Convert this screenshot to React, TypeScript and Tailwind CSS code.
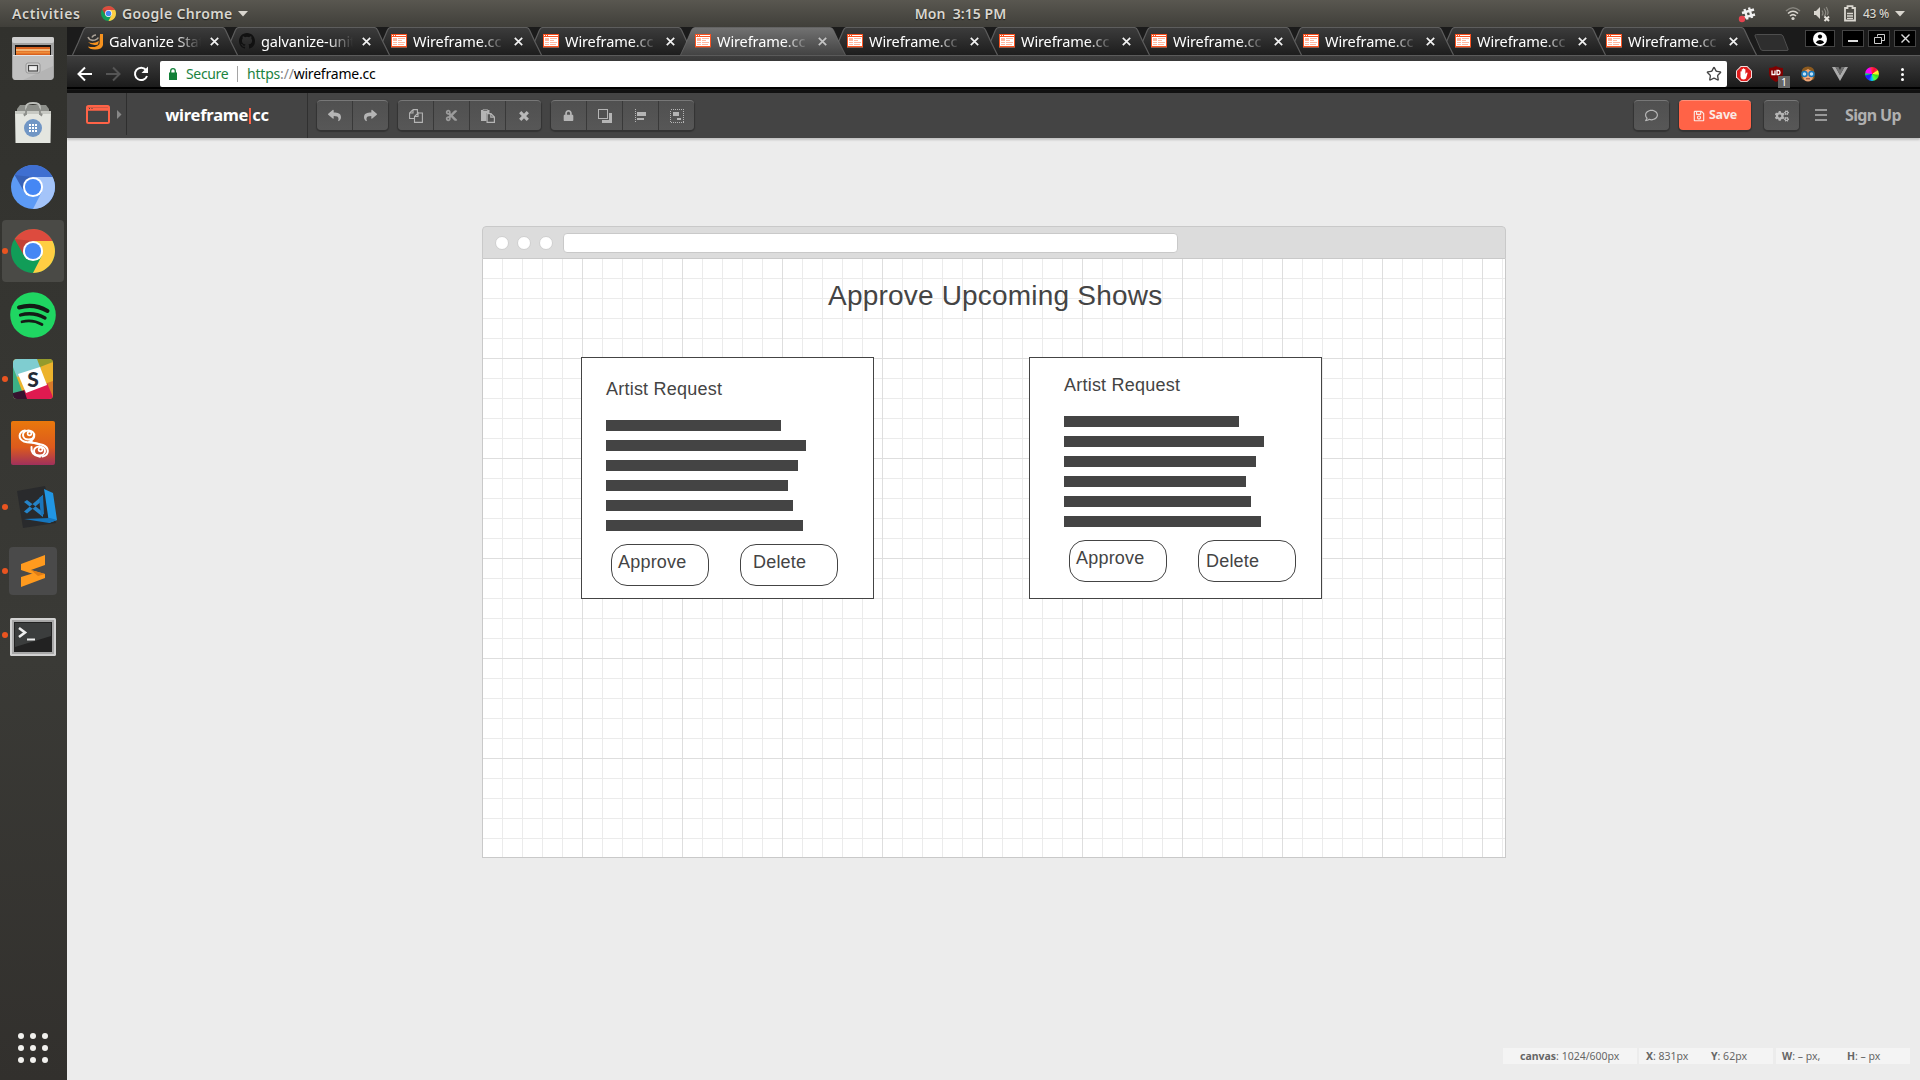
import React from "react";
import { LuStar } from "react-icons/lu";
import {
  FaReply,
  FaShare,
  FaLock,
  FaCogs,
  FaRegSave,
  FaRegComment,
  FaCut,
} from "react-icons/fa";

/* ---------- Shared drawings ---------- */

function ChromeLogo({ size, blue = false }: { size: number; blue?: boolean }) {
  const [top, left, right] = blue ? ["#3f6fd1", "#5c9af5", "#a4c4f9"] : ["#dd4b3e", "#119d58", "#ffce43"];
  return (
    <svg width={size} height={size} viewBox="0 0 48 48" className="shrink-0">
      <circle cx="24" cy="24" r="24" fill={left} />
      <path d="M24 13H45.3A24 24 0 0 1 24 48L33.5 29.5Z" fill={right} />
      <path d="M3.9 11A24 24 0 0 1 45.4 13H24L14.5 29.5Z" fill={top} />
      <path d="M3.9 11L14.5 29.5L24 13Z" fill="#000" opacity=".12" />
      <circle cx="24" cy="24" r="11" fill="#fff" />
      <circle cx="24" cy="24" r="8.8" fill="#4587f4" />
    </svg>
  );
}

function WireframeFavicon() {
  return (
    <svg width="16" height="14" viewBox="0 0 16 14" shapeRendering="crispEdges" className="shrink-0">
      <rect width="16" height="14" fill="#fb5422" />
      <rect x="1" y="1" width="1" height="1" fill="#fff" />
      <rect x="3" y="1" width="1" height="1" fill="#fff" />
      <rect x="5" y="1" width="10" height="1" fill="#fff" />
      <rect x="1" y="3" width="14" height="9" fill="#fff" />
      <path d="M2 4h4v3H2zM7 4h7v1H7zM7 6h4v1H7zM2 8h4v1H2zM7 8h7v1H7zM2 10h4v1H2zM7 10h6v1H7z" fill="#ffb79f" />
      <rect y="12" width="16" height="1" fill="#fb5422" />
      <rect y="13" width="16" height="1" fill="#8e5a49" />
    </svg>
  );
}

/* ---------- System bar ---------- */

function TopBar() {
  return (
    <header className="grid h-[27px] grid-cols-3 items-center bg-gradient-to-b from-[#595750] to-[#403f3a] text-[14px] font-semibold leading-[27px] text-[#d9d6cf] [text-shadow:0_1px_1px_rgba(0,0,0,.6)]">
      <div className="flex items-center pl-3">
        <span className="w-[89px] tracking-[0.6px]">Activities</span>
        <ChromeLogo size={15} />
        <span className="ml-[6px] w-[112px] whitespace-nowrap tracking-[0.35px]">Google Chrome</span>
        <svg width="10" height="6" className="ml-1"><path d="M0 0H10L5 5.5Z" fill="#d9d6cf" /></svg>
      </div>
      <div className="whitespace-pre pl-[1px] text-center tracking-[0.05px]">Mon  3:15 PM</div>
      <div className="flex items-center justify-end pr-[15px]">
        <svg width="18" height="18" viewBox="0 0 18 18" className="mr-[29px]">
          <g stroke="#f1f1f1" strokeWidth="2.4">
            <path d="M6.500 4L9.500 14.500M11 2.500L14 13M4 8L16 4.500M5 12.800L17 9.500" />
          </g>
          <circle cx="4" cy="14" r="3.2" fill="#e5434f" />
        </svg>
        <svg width="16" height="15" viewBox="0 0 16 15" fill="none" className="mr-3" strokeWidth="1.6">
          <path d="M1 5Q8 -1.5 15 5" stroke="#85837d" />
          <path d="M3 7.5Q8 3 13 7.5" stroke="#d9d6cf" />
          <path d="M5 10Q8 7.2 11 10" stroke="#d9d6cf" />
          <circle cx="8" cy="12.5" r="1.6" fill="#d9d6cf" />
        </svg>
        <svg width="18" height="16" viewBox="0 0 18 16" fill="none" className="mr-[13px]">
          <path d="M1 5h2l4-4v12l-4-4H1z" fill="#d9d6cf" />
          <path d="M9 4.5q2 2.5 0 5M11 2.5q3.4 4.5 0 8M13.2 1q3 5 1 8" stroke="#8b8982" strokeWidth="1.2" />
          <path d="M11.5 10.5l4.5 4.5M16 10.5l-4.5 4.5" stroke="#e5e2db" strokeWidth="2" />
        </svg>
        <svg width="12" height="17" viewBox="0 0 12 17" className="mr-[7px]">
          <path d="M1 15.5V3H3.5V1.2H8.5V3H11V15.5Z" fill="none" stroke="#d9d6cf" strokeWidth="1.8" />
          <path d="M3 8.5h6M3 11h6M3 13.3h6" stroke="#d9d6cf" strokeWidth="1.3" />
        </svg>
        <span className="w-[27px] whitespace-nowrap text-[12px] font-medium tracking-[-0.3px]">43 %</span>
        <svg width="10" height="6" className="ml-[5px]"><path d="M0 0H10L5 5.5Z" fill="#d9d6cf" /></svg>
      </div>
    </header>
  );
}

/* ---------- Dock ---------- */

function FilesIcon() {
  return (
    <svg width="44" height="46" viewBox="0 0 44 46">
      <rect x="1" y="1" width="42" height="42" rx="2" fill="#a3a3a3" />
      <rect x="1" y="1" width="42" height="6" rx="2" fill="#cfcfcf" />
      <rect x="4" y="9" width="36" height="11" fill="#191512" />
      <rect x="5" y="11" width="34" height="9" fill="#d9611d" />
      <rect x="5" y="13" width="34" height="2" fill="#f3b677" />
      <rect x="5" y="15.5" width="34" height="2" fill="#ef8c38" />
      <path d="M2 19H42V42a2 2 0 0 1-2 2H4a2 2 0 0 1-2-2Z" fill="#b4b4b4" />
      <path d="M2 19H42V30L12 44H4a2 2 0 0 1-2-2Z" fill="#c8c8c8" opacity=".6" />
      <path d="M2 19.500H42" stroke="#e4e4e4" />
      <rect x="15" y="27" width="14" height="10" rx="2" fill="#d8d8d8" stroke="#949494" />
      <rect x="17.500" y="29.500" width="9" height="5.500" fill="#eee" stroke="#444" strokeWidth="1.200" />
    </svg>
  );
}

function BagIcon() {
  return (
    <svg width="40" height="44" viewBox="0 0 40 44">
      <path d="M4 8L7 4H33L36 8V14H4Z" fill="#8d8f8a" />
      <path d="M13 9V6q0-4 7-4t7 4v3" fill="none" stroke="#bdbfba" strokeWidth="1.800" />
      <path d="M2 10Q20 16 38 10L37.500 42H2.500Z" fill="#e4e6e0" />
      <path d="M2 10h36v3H2z" fill="#c7c9c3" />
      <path d="M13 14q-3-2-1 1M27 14q3-2 1 1M13 14V11q0-5 7-5t7 5v3" fill="none" stroke="#8c8e89" strokeWidth="1.800" />
      <circle cx="20" cy="27" r="9" fill="#7096c5" />
      <path d="M16 23h2v2h-2zM19 23h2v2h-2zM22 23h2v2h-2zM16 26h2v2h-2zM19 26h2v2h-2zM22 26h2v2h-2zM16 29h2v2h-2zM19 29h2v2h-2zM22 29h2v2h-2z" fill="#fff" />
    </svg>
  );
}

function SpotifyIcon() {
  return (
    <svg width="46" height="46" viewBox="0 0 46 46">
      <circle cx="23" cy="23" r="22.800" fill="#1fd662" />
      <g fill="none" stroke="#141b16" strokeLinecap="round">
        <path d="M9 15.500Q24 11 37.500 19" strokeWidth="4" />
        <path d="M10.500 23Q23.500 19.500 35 26" strokeWidth="3.300" />
        <path d="M12 29.800Q22.500 27 32 32.500" strokeWidth="2.700" />
      </g>
    </svg>
  );
}

function SlackIcon() {
  return (
    <div className="relative h-10 w-10 overflow-hidden rounded">
      <svg width="40" height="40" viewBox="0 0 40 40" className="absolute inset-0">
        <rect width="40" height="40" fill="#ecb32d" />
        <path d="M0 0H25L28 10L4 18L0 10Z" fill="#7fcdd0" />
        <path d="M24 0H40V3L27 8Z" fill="#949b2c" />
        <path d="M0 8L12 40H0Z" fill="#3cb187" />
        <path d="M0 34L12 31L15 40H0Z" fill="#36132f" />
        <path d="M11 31L35 24L40 37V40H14Z" fill="#df1a50" />
        <path d="M34 24L40 22V38Z" fill="#d77a2b" />
        <path d="M5 15L27 8L34 26L13 34Z" fill="#fff" />
      </svg>
      <span className="absolute inset-0 text-center font-['Lato'] text-[21px] font-black leading-[40px] text-[#242b35]">S</span>
    </div>
  );
}

function SwirlIcon() {
  return (
    <svg width="46" height="46" viewBox="0 0 46 46">
      <defs>
        <linearGradient id="swirl" x1="0" y1="0" x2="0" y2="1">
          <stop offset="0" stopColor="#e9780c" />
          <stop offset=".6" stopColor="#dc5a1d" />
          <stop offset="1" stopColor="#a0305c" />
        </linearGradient>
      </defs>
      <rect x="1" y="1" width="44" height="44" rx="2" fill="url(#swirl)" />
      <g fill="none" stroke="#fff" strokeLinecap="round">
        <path d="M15 10.500C8 12 8 19 14 21.500C19 23.500 27 22 29.500 24.500" strokeWidth="2" />
        <ellipse cx="18.500" cy="15" rx="5.500" ry="4.600" strokeWidth="2" />
        <circle cx="19.500" cy="13.500" r="1.900" strokeWidth="1.700" />
        <path d="M24.500 14Q25 20 19 21.500" strokeWidth="1.600" />
        <path d="M32.500 36.500C40 35 39 27.500 33 25C29 23.500 22 24 21 21" strokeWidth="2" />
        <ellipse cx="29.500" cy="31" rx="5.500" ry="4.600" strokeWidth="2" />
        <circle cx="30.500" cy="29.500" r="1.900" strokeWidth="1.700" />
        <path d="M21.500 27Q20.500 35 30 36.800" strokeWidth="2" />
      </g>
    </svg>
  );
}

function CodeIcon() {
  return (
    <svg width="44" height="44" viewBox="0 0 44 44">
      <path d="M3 6L31 1L42 38L9 43Z" fill="#292a2c" />
      <path d="M30 4L39 8L43 35L35 38L31 10Z" fill="#2196e3" />
      <path d="M10 34L35 38L43 35L36 33Z" fill="#1676bd" />
      <path d="M10 17L13 15L29 27V32ZM10 26.500L13 28.500L29 15V10Z" fill="#2584c9" />
      <path d="M25 13L29 10L30 29L27 31Z" fill="#1b75ba" />
    </svg>
  );
}

function SublimeIcon() {
  return (
    <div className="flex h-12 w-12 items-center justify-center rounded bg-[#4a4a4a]">
      <svg width="26" height="34" viewBox="0 0 26 34">
        <path d="M1 10L25 1V11L11 16L25 20V24L1 16Z" fill="#ff9a1e" />
        <path d="M1 15.500L25 22V24L1 33V23L14 19Z" fill="#ff9a1e" />
        <path d="M11 16L25 20L18 22Z" fill="#e07c14" />
      </svg>
    </div>
  );
}

function TerminalIcon() {
  return (
    <svg width="46" height="38" viewBox="0 0 46 38">
      <rect width="46" height="38" rx="1.500" fill="#d2d2d2" />
      <rect x="2" y="2" width="42" height="34" fill="#a8a8a8" />
      <rect x="4" y="4" width="38" height="30" fill="#222" />
      <path d="M5 5H41V18L5 29Z" fill="#3b3d3d" />
      <path d="M9 10L15 14.500L9 19" fill="none" stroke="#eee" strokeWidth="2.600" />
      <path d="M17 21.500h8" stroke="#eee" strokeWidth="2" />
    </svg>
  );
}

const dockItems: { name: string; icon: React.ReactNode; running?: boolean; active?: boolean; nudge?: string }[] = [
  { name: "Files", icon: <FilesIcon />, nudge: "pb-[1px]" },
  { name: "Software", icon: <BagIcon />, nudge: "pb-[1px]" },
  { name: "Chromium", icon: <ChromeLogo size={44} blue /> },
  { name: "Chrome", icon: <ChromeLogo size={44} />, running: true, active: true },
  { name: "Spotify", icon: <SpotifyIcon /> },
  { name: "Slack", icon: <SlackIcon />, running: true },
  { name: "Swirl", icon: <SwirlIcon /> },
  { name: "Code", icon: <CodeIcon />, running: true, nudge: "pl-[5px]" },
  { name: "Sublime", icon: <SublimeIcon />, running: true },
  { name: "Terminal", icon: <TerminalIcon />, running: true, nudge: "pt-[4px]" },
];

function Dock() {
  return (
    <aside className="flex w-[67px] shrink-0 flex-col justify-between bg-gradient-to-b from-[#31312d] via-[#3a3a36] via-60% to-[#32302d]">
      <div className="flex flex-col gap-[2px] pl-[2px] pt-[1px]">
        {dockItems.map((d) => (
          <div
            key={d.name}
            className={`relative flex h-[62px] w-[62px] items-center justify-center rounded ${d.active ? "bg-[#4a4a46]" : ""} ${d.nudge ?? ""}`}
          >
            {d.icon}
            {d.running && <span className="absolute left-0 top-7 h-[6px] w-[6px] rounded-full bg-[#e95420]" />}
          </div>
        ))}
      </div>
      <div className="mb-[17px] ml-[18px] grid w-[30px] grid-cols-3 gap-[6px]">
        {Array.from({ length: 9 }, (_, i) => (
          <span key={i} className="h-[6px] w-[6px] rounded-full bg-[#f2f1ee]" />
        ))}
      </div>
    </aside>
  );
}

/* ---------- Browser chrome ---------- */

type TabInfo = { title: string; icon: React.ReactNode; active?: boolean };

const wire = (active = false): TabInfo => ({ title: "Wireframe.cc", icon: <WireframeFavicon />, active });

const tabs: TabInfo[] = [
  {
    title: "Galvanize Stat",
    icon: (
      <svg width="16" height="17" viewBox="0 0 16 17" className="shrink-0">
        <path d="M13 1H16V12Q15 16.500 8 16.500Q2 16.500 1 13.500Q9 15.500 12.500 11Z" fill="#f6921e" />
        <path d="M1 9Q6 11.500 12 8L11 11.500Q5 13.500 1 9Z" fill="#f6921e" />
        <path d="M1 4Q3 8.500 8 7Q11 6 11 4.500M5 4.500Q6 2 9 2" stroke="#a8a096" strokeWidth="1.600" fill="none" />
      </svg>
    ),
  },
  {
    title: "galvanize-unit",
    icon: (
      <svg width="16" height="16" viewBox="0 0 16 16" className="shrink-0">
        <path
          fill="#111"
          d="M8 0C3.580 0 0 3.580 0 8c0 3.540 2.290 6.530 5.470 7.590.4.070.55-.17.55-.38 0-.19-.01-.82-.01-1.490-2.010.37-2.530-.49-2.690-.94-.09-.23-.48-.94-.82-1.130-.28-.15-.68-.52-.01-.53.63-.01 1.080.58 1.230.82.72 1.210 1.870.87 2.330.66.07-.52.28-.87.51-1.070-1.780-.2-3.640-.89-3.640-3.950 0-.87.31-1.590.82-2.150-.08-.2-.36-1.020.08-2.120 0 0 .67-.21 2.200.82a7.400 7.400 0 0 1 4 0c1.530-1.040 2.200-.82 2.200-.82.44 1.100.16 1.920.08 2.120.51.56.82 1.270.82 2.150 0 3.070-1.870 3.750-3.650 3.950.29.25.54.73.54 1.480 0 1.070-.01 1.930-.01 2.200 0 .21.15.46.55.38A8 8 0 0 0 16 8c0-4.420-3.580-8-8-8z"
        />
      </svg>
    ),
  },
  wire(),
  wire(),
  wire(true),
  wire(),
  wire(),
  wire(),
  wire(),
  wire(),
  wire(),
];

function Tab({ tab, index }: { tab: TabInfo; index: number }) {
  const id = `tab-fill-${index}`;
  return (
    <div
      className={`relative flex h-7 w-[166px] shrink-0 items-center pl-[15px] ${index === 9 ? "-mr-[15px]" : "-mr-[14px]"}`}
      style={{ zIndex: tab.active ? 30 : 20 - index }}
    >
      <svg width="166" height="28" viewBox="0 0 166 28" className="absolute inset-0">
        <defs>
          <linearGradient id={id} x1="0" y1="0" x2="0" y2="1">
            <stop offset="0" stopColor={tab.active ? "#727272" : "#3c3c3c"} />
            <stop offset="1" stopColor={tab.active ? "#434343" : "#1d1d1d"} />
          </linearGradient>
        </defs>
        <path d="M0.500 28L6 16L11.500 3Q12.500 0.500 15 0.500H150Q152.500 0.500 153.500 3L159 15L165.500 28" fill={`url(#${id})`} stroke={tab.active ? "#777" : "#5d5d5d"} strokeWidth={tab.active ? 0.6 : 1.2} />
      </svg>
      <div className="relative flex items-center">
        {tab.icon}
        <span className="ml-[6px] w-[92px] overflow-hidden whitespace-nowrap text-[14.5px] leading-5 tracking-[-0.1px] text-white [mask-image:linear-gradient(to_right,#000_72%,transparent_100%)]">
          {tab.title}
        </span>
        <svg width="9" height="9" viewBox="0 0 9 9" className="ml-[9px]">
          <path d="M0.800 0.800L8.200 8.200M8.200 0.800L0.800 8.200" stroke={tab.active ? "#c4c4c4" : "#f2f2f2"} strokeWidth="1.700" />
        </svg>
      </div>
    </div>
  );
}

function WinButton({ wide = false, children }: { wide?: boolean; children: React.ReactNode }) {
  return (
    <div className={`flex h-[17px] items-center justify-center border border-[#444] bg-black ${wide ? "mr-[3px] w-[30px]" : "w-[22px]"}`}>
      {children}
    </div>
  );
}

function TabStrip() {
  return (
    <div className="flex h-7 justify-between bg-[#1b1b1b] pl-[5px]">
      <div className="flex">
        {tabs.map((t, i) => (
          <Tab key={i} tab={t} index={i} />
        ))}
        <svg width="36" height="18" viewBox="0 0 36 18" className="ml-[11px] mt-[7px]">
          <path d="M1 2Q0.500 0.500 2.500 0.500H26Q28.500 0.500 29 2L34 15Q34.500 16.500 33 16.500H9Q7 16.500 6.500 15Z" fill="#2e2e2e" stroke="#4e4e4e" />
        </svg>
      </div>
      <div className="mr-1 mt-[3px] flex gap-1">
        <WinButton wide>
          <svg width="14" height="14" viewBox="0 0 14 14">
            <circle cx="7" cy="7" r="7" fill="#fff" />
            <circle cx="7" cy="4.600" r="2.100" fill="#000" />
            <path d="M2.800 10.500Q4 8 7 8T11.200 10.500Q9 12.300 7 12.300T2.800 10.500Z" fill="#000" />
          </svg>
        </WinButton>
        <WinButton>
          <span className="mt-1 h-[2px] w-[10px] bg-[#ddd]" />
        </WinButton>
        <WinButton>
          <svg width="11" height="10" viewBox="0 0 11 10" fill="none" stroke="#ccc">
            <path d="M3.500 2.500V0.500H10.500V6.500H7.500M0.500 3.500H7.500V9.500H0.500Z" />
          </svg>
        </WinButton>
        <WinButton>
          <svg width="9" height="9" viewBox="0 0 9 9" stroke="#ddd" strokeWidth="1.400">
            <path d="M0.500 0.500L8.500 8.500M8.500 0.500L0.500 8.500" />
          </svg>
        </WinButton>
      </div>
    </div>
  );
}

function Extensions() {
  return (
    <div className="flex items-center">
      <svg width="16" height="16" viewBox="0 0 16 16" className="ml-[9px]">
        <path d="M4.700 0H11.300L16 4.700V11.300L11.300 16H4.700L0 11.300V4.700Z" fill="#f3dcdc" />
        <path d="M5.100 1H10.900L15 5.100V10.900L10.900 15H5.100L1 10.900V5.100Z" fill="#df1c1c" />
        <path d="M4.500 5.500q.7-.7 1.200 0V3.500q.6-.8 1.200 0V2.700q.7-.8 1.300 0v.6q.7-.6 1.200.2V8l1.200-1.500q1-.3 1 .6L10 12.500q-1 1-2.500 1Q5 13.500 4.500 11Z" fill="#fff" />
      </svg>
      <div className="relative ml-4 h-4 w-4">
        <svg width="16" height="16" viewBox="0 0 16 16">
          <path d="M8 0Q11 2 15 2V7Q15 13 8 16Q1 13 1 7V2Q5 2 8 0Z" fill="#800000" />
          <path d="M4 4.500V8.500H7V4.500M9 4.500V8.500H10.500Q12 8.500 12 6.500T10.500 4.500Z" fill="none" stroke="#fff" strokeWidth="1.300" />
        </svg>
        <span className="absolute left-[10px] top-[10px] h-3 w-[12px] bg-[#666] text-center text-[10.5px] leading-3 text-white">1</span>
      </div>
      <svg width="16" height="16" viewBox="0 0 16 16" className="ml-4">
        <path d="M1.500 7Q1.500 0.500 8 0.500T14.500 7V12L13 14H3L1.500 12Z" fill="#8c5a1f" />
        <path d="M3 6L8 3L13 6V11Q12 15.500 8 15.500T3 11Z" fill="#efa878" />
        <circle cx="4.500" cy="8" r="2.500" fill="#bfe3f8" stroke="#1778bd" strokeWidth="1.500" />
        <circle cx="11.500" cy="8" r="2.500" fill="#bfe3f8" stroke="#1778bd" strokeWidth="1.500" />
        <path d="M6 12.800h4" stroke="#8b4031" />
      </svg>
      <svg width="16" height="14" viewBox="0 0 16 14" className="ml-4">
        <path d="M0 0H3.500L8 8L12.500 0H16L8 14Z" fill="#aaa" />
        <path d="M3.500 0H6.500L8 3L9.500 0H12.500L8 8Z" fill="#707070" />
      </svg>
      <div className="ml-[17px] h-[14px] w-[14px] rounded-full bg-[conic-gradient(#f33,#f04_8%,#f33_14%,#ff3_18%,#ee2_24%,#3d2_30%,#5f3_42%,#0cf_50%,#22f_60%,#22f_70%,#0e5_74%,#f0f_80%,#f0f_92%,#f33)]" />
      <div className="ml-[22px] flex flex-col gap-[2px]">
        {[0, 1, 2].map((i) => (
          <span key={i} className="h-[3px] w-[3px] rounded-full bg-white" />
        ))}
      </div>
    </div>
  );
}

function AddressBar() {
  return (
    <div className="h-[38px] border-t border-[#5a5a5a] bg-[linear-gradient(#3e3e3e,#1b1b1b_31px,#000_31px,#000_33px,#222_33px,#111_34px)] pt-[5px]">
      <div className="flex h-[26px] items-center">
        <svg width="82" height="16" viewBox="0 0 82 16" className="ml-[10px] shrink-0" fill="none">
          <path d="M15 8H2M8 1.500L1.500 8L8 14.500" stroke="#fff" strokeWidth="2" />
          <path d="M29 8H42M36 1.500L42.500 8L36 14.500" stroke="#555" strokeWidth="2" />
          <path d="M69 4A6.200 6.200 0 1 0 70 10" stroke="#fff" strokeWidth="2" />
          <path d="M71 0.500V7H64.500Z" fill="#fff" />
        </svg>
        <div className="ml-[1px] flex h-[26px] w-[1567px] items-center rounded-[2px] bg-white pl-[9px] text-[14px] leading-[26px]">
          <svg width="8" height="12" viewBox="0 0 8 12">
            <path d="M0 4.500H8V12H0Z" fill="#128038" />
            <path d="M1.700 5V3a2.300 2.300 0 0 1 4.600 0V5" fill="none" stroke="#128038" strokeWidth="1.300" />
          </svg>
          <span className="ml-[9px] w-[43px] whitespace-nowrap tracking-[-0.35px] text-[#1c833f]">Secure</span>
          <span className="ml-2 h-4 w-px bg-[#a5a5a5]" />
          <span className="ml-[9px] whitespace-nowrap tracking-[-0.2px] text-black">
            <span className="text-[#1c833f]">https</span>
            <span className="text-[#888]">://</span>wireframe.cc
          </span>
          <LuStar size={16} className="ml-auto mr-[5px] text-[#444]" strokeWidth={2} />
        </div>
        <Extensions />
      </div>
    </div>
  );
}

/* ---------- Wireframe editor toolbar ---------- */

function ButtonGroup({ icons, className = "" }: { icons: React.ReactNode[]; className?: string }) {
  return (
    <div className={`flex h-[30px] overflow-hidden rounded border-t border-[#777] bg-gradient-to-b from-[#505050] to-[#575757] text-[#b5b5b5] shadow-[0_1px_1px_1px_#333] ${className}`}>
      {icons.map((icon, i) => (
        <button key={i} className={`flex h-[29px] items-center justify-center ${i > 0 ? "w-9 border-l border-[#393939]" : "w-[35px]"}`}>
          {icon}
        </button>
      ))}
    </div>
  );
}

const CopyIcon = (
  <svg width="14" height="14" viewBox="0 0 14 14" fill="none" stroke="#b5b5b5" strokeWidth="1.1">
    <path d="M4 0.600H8.400V4M4 0.600L0.600 4V9.500H5M0.600 4H4V0.600M9 4H13.400V13.400H5.500V7.500L9 4V7.500H5.500" />
  </svg>
);

const PasteIcon = (
  <svg width="14" height="14" viewBox="0 0 14 14">
    <path d="M0 1H8.500V4H5.500V12H0Z" fill="#b5b5b5" />
    <path d="M2 0.500H6.500V2H2Z" fill="#555" stroke="#b5b5b5" strokeWidth="0.600" />
    <path d="M6.100 4.600H10L13.400 8V13.400H6.100ZM9.800 4.600V8.200H13.400" fill="none" stroke="#b5b5b5" strokeWidth="1.200" />
  </svg>
);

const RemoveIcon = (
  <svg width="10" height="10" viewBox="0 0 10 10" fill="none" stroke="#b9b9b9" strokeWidth="3.200">
    <path d="M1.200 1.200L8.800 8.800M8.800 1.200L1.200 8.800" />
  </svg>
);

const LayersIcon = (
  <svg width="14" height="14" viewBox="0 0 14 14" shapeRendering="crispEdges">
    <path d="M4 11H11V4H14V14H4Z" fill="#b5b5b5" />
    <rect x="0.500" y="0.500" width="9" height="9" fill="#505050" stroke="#b5b5b5" />
  </svg>
);

const AlignIcon = (
  <svg width="12" height="14" viewBox="0 0 12 14" shapeRendering="crispEdges">
    <path d="M0.500 0V14" stroke="#b5b5b5" strokeDasharray="1 1" />
    <path d="M2 3H11V7H2ZM2 9H9V11H2Z" fill="#b5b5b5" />
  </svg>
);

const GroupIcon = (
  <svg width="14" height="14" viewBox="0 0 14 14" shapeRendering="crispEdges">
    <rect x="0.500" y="0.500" width="13" height="13" fill="none" stroke="#b5b5b5" strokeDasharray="1 1" />
    <path d="M3 3H9V7H3ZM7 9H11V11H7Z" fill="#b5b5b5" />
  </svg>
);

function EditorBar() {
  return (
    <div className="relative z-10 flex h-[45px] items-center bg-[#444] pb-px shadow-[0_2px_2px_0_#c2c2c2]">
      <div className="flex h-[42px] w-[60px] items-center self-start border-r border-[#2e2e2e] pl-[19px]">
        <svg width="24" height="19" viewBox="0 0 24 19">
          <rect x="1" y="1" width="22" height="17" rx="1.500" fill="none" stroke="#ff6347" strokeWidth="2" />
          <path d="M1 4H23" stroke="#ff6347" strokeWidth="3.500" />
          <path d="M3 3.500h1M5.500 3.500h1" stroke="#444" strokeWidth="1" />
        </svg>
        <svg width="5" height="9" className="ml-[7px]"><path d="M0 0L4.500 4.500L0 9Z" fill="#888" /></svg>
      </div>
      <div className="flex h-[45px] w-[181px] items-center justify-center self-start border-r border-[#303030] text-[16.5px] font-bold tracking-[-0.25px] text-white">
        wireframe<span className="mx-[1px] h-4 w-[2px] bg-[#ff6347]" />cc
      </div>
      <ButtonGroup className="ml-[9px]" icons={[<FaReply size={13} />, <FaShare size={13} />]} />
      <ButtonGroup className="ml-[10px]" icons={[CopyIcon, <FaCut size={13} className="opacity-75" />, PasteIcon, RemoveIcon]} />
      <ButtonGroup className="ml-[10px]" icons={[<FaLock size={11} />, LayersIcon, AlignIcon, GroupIcon]} />
      <ButtonGroup className="ml-auto" icons={[<FaRegComment size={13} />]} />
      <button className="ml-[10px] flex h-[30px] w-[72px] items-center justify-center rounded border-t border-[#ff907a] bg-[#ff6347] text-[12.5px] font-bold text-[#fbe9e5] shadow-[0_1px_1px_1px_#333]">
        <FaRegSave size={12} className="mr-[4px]" />
        <span className="tracking-[-0.2px]">Save</span>
      </button>
      <ButtonGroup className="ml-[13px]" icons={[<FaCogs size={14} />]} />
      <div className="ml-4 flex w-[12px] flex-col gap-[3px]">
        {[0, 1, 2].map((i) => (
          <span key={i} className="h-[2px] bg-[#999]" />
        ))}
      </div>
      <span className="ml-[18px] mr-[17px] w-[58px] whitespace-nowrap text-[16px] font-bold tracking-[-0.65px] text-[#b0b0b0]">Sign Up</span>
    </div>
  );
}

/* ---------- Canvas ---------- */

const lineWidths = [175, 200, 192, 182, 187, 197];

function RequestCard({ className, inner, deleteText }: { className: string; inner: string; deleteText: string }) {
  return (
    <div className={`absolute h-[242px] w-[293px] border border-[#444] bg-white ${className}`}>
      <div className={inner}>
        <h2 className="text-[18px] leading-5 tracking-[0.22px]">Artist Request</h2>
        <div className="mt-[21px] flex flex-col gap-[9px]">
          {lineWidths.map((w) => (
            <div key={w} className="h-[11px] bg-[#444]" style={{ width: w }} />
          ))}
        </div>
        <div className="ml-[5px] mt-[13px] flex gap-[31px] text-[18px] leading-5 tracking-[0.2px]">
          <div className="h-[42px] w-[98px] rounded-[16px] border border-[#444] pl-[6px] pt-[7px]">Approve</div>
          <div className={`h-[42px] w-[98px] rounded-[16px] border border-[#444] ${deleteText}`}>Delete</div>
        </div>
      </div>
    </div>
  );
}

function Canvas() {
  return (
    <div className="ml-[415px] mt-[88px] w-[1024px] overflow-hidden rounded-t-[4px] font-['Liberation_Sans',Arial,sans-serif] text-[#444]">
      <div className="flex h-[33px] items-center rounded-t-[4px] border border-[#c9c9c9] bg-[#dcdcdc] pl-[12px]">
        <div className="flex gap-2">
          {[0, 1, 2].map((i) => (
            <span key={i} className="h-[14px] w-[14px] rounded-full border border-[#cfcfcf] bg-white" />
          ))}
        </div>
        <div className="ml-[10px] h-5 w-[615px] rounded border border-[#c9c9c9] bg-white" />
      </div>
      <div className="relative h-[599px] border border-t-0 border-[#c9c9c9] bg-white">
        <div className="absolute inset-0 bg-[linear-gradient(to_right,transparent_99px,#dedede_99px),linear-gradient(to_bottom,transparent_99px,#dedede_99px),linear-gradient(to_right,transparent_19px,#ebebeb_19px),linear-gradient(to_bottom,transparent_19px,#ebebeb_19px)] bg-[size:100px_100px,100px_100px,20px_20px,20px_20px]" />
        <h1 className="absolute left-[345px] top-[21px] whitespace-nowrap text-[28px] leading-8 tracking-[0.2px]">Approve Upcoming Shows</h1>
        <RequestCard className="left-[98px] top-[98px]" inner="pl-6 pt-[21px]" deleteText="pl-[12px] pt-[7px]" />
        <RequestCard className="left-[546px] top-[98px]" inner="pl-[34px] pt-[17px]" deleteText="pl-[7px] pt-[10px]" />
      </div>
    </div>
  );
}

function StatusBar() {
  return (
    <div className="absolute bottom-4 right-[10px] flex h-4 text-[10.5px] leading-4 text-[#666] [&>div]:w-[134px] [&>div]:whitespace-nowrap [&>div]:bg-[#f4f4f4]">
      <div className="pl-[17px]"><b>canvas</b>: 1024/600px</div>
      <div className="ml-[2px] flex pl-[7px]">
        <span className="w-[65px]"><b>X</b>: 831px</span>
        <span><b>Y</b>: 62px</span>
      </div>
      <div className="ml-[3px] flex pl-[6px]">
        <span className="w-[65px]"><b>W</b>: – px,</span>
        <span><b>H</b>: – px</span>
      </div>
    </div>
  );
}

export default function App() {
  return (
    <div className="flex h-[1080px] w-[1920px] flex-col overflow-hidden bg-[#ececec] font-['Noto_Sans',sans-serif]">
      <TopBar />
      <div className="flex min-h-0 flex-1">
        <Dock />
        <main className="relative min-w-0 flex-1 overflow-hidden">
          <TabStrip />
          <AddressBar />
          <EditorBar />
          <Canvas />
          <StatusBar />
        </main>
      </div>
    </div>
  );
}
